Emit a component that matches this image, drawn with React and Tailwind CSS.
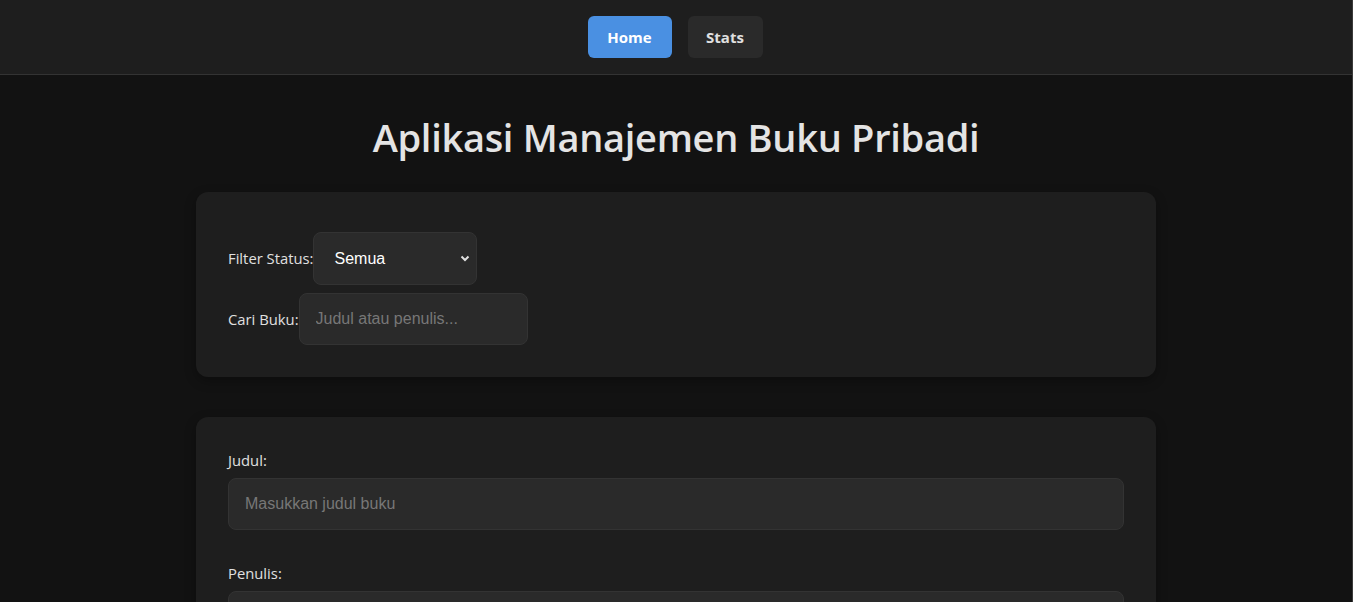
import React from "react";

export default function App() {
  const sans = { fontFamily: '"Open Sans", "Noto Sans", sans-serif' };
  const arial = { fontFamily: '"Liberation Sans", Arial, sans-serif' };
  return (
    <div className="min-h-[602px] bg-[#121212] text-[#e0e0e0] border-r border-[#3a3a3a]" style={sans}>
      <header className="h-[75px] bg-[#1e1e1e] border-b border-[#333333] flex items-center justify-center gap-4 pr-[2px]">
        <button className="w-[84px] h-[42px] rounded-[6px] bg-[#4a90e2] text-white font-bold text-[15px]">Home</button>
        <button className="w-[75px] h-[42px] rounded-[6px] bg-[#2a2a2a] text-[#e0e0e0] font-bold text-[15px]">Stats</button>
      </header>
      <main className="w-[960px] mx-auto pt-[34px]">
        <h1 className="text-center text-[38px] font-semibold leading-[56px] text-[#e4e4e4] tracking-[-0.3px]">
          Aplikasi Manajemen Buku Pribadi
        </h1>
        <section className="mt-[27px] bg-[#1e1e1e] rounded-[12px] shadow-[0_4px_12px_rgba(0,0,0,0.3)] pt-10 pb-8 px-8 flex flex-col gap-2">
          <div className="flex items-center">
            <label className="text-[14.8px]">Filter Status:</label>
            <div className="relative">
              <select
                className="appearance-none w-[164px] h-[53px] bg-[#2a2a2a] border border-[#333333] rounded-[8px] pl-[20px] text-white text-[16px] outline-none"
                style={arial}
                defaultValue="Semua"
              >
                <option>Semua</option>
              </select>
              <svg className="absolute right-[7px] top-[23px] pointer-events-none" width="10" height="7" viewBox="0 0 10 7">
                <path d="M1.5 1.5 L5 5 L8.5 1.5" stroke="#e0e0e0" strokeWidth="2" fill="none" />
              </svg>
            </div>
          </div>
          <div className="flex items-center">
            <label className="text-[14.8px]">Cari Buku:</label>
            <input
              className="w-[229px] h-[52px] bg-[#2a2a2a] border border-[#333333] rounded-[8px] px-4 text-[16px] text-white placeholder:text-[#777777] outline-none"
              style={arial}
              placeholder="Judul atau penulis..."
            />
          </div>
        </section>
        <section className="mt-10 bg-[#1e1e1e] rounded-[12px] shadow-[0_4px_12px_rgba(0,0,0,0.3)] p-8 flex flex-col gap-8">
          <div className="flex flex-col">
            <label className="text-[14.8px] leading-[22px] mb-[7px]">Judul:</label>
            <input
              className="w-full h-[52px] bg-[#2a2a2a] border border-[#333333] rounded-[8px] px-4 text-[16px] text-white placeholder:text-[#777777] outline-none"
              style={arial}
              placeholder="Masukkan judul buku"
            />
          </div>
          <div className="flex flex-col">
            <label className="text-[14.8px] leading-[22px] mb-[7px]">Penulis:</label>
            <input
              className="w-full h-[52px] bg-[#2a2a2a] border border-[#333333] rounded-[8px] px-4 text-[16px] text-white placeholder:text-[#777777] outline-none"
              style={arial}
              placeholder="Masukkan nama penulis"
            />
          </div>
        </section>
      </main>
    </div>
  );
}
